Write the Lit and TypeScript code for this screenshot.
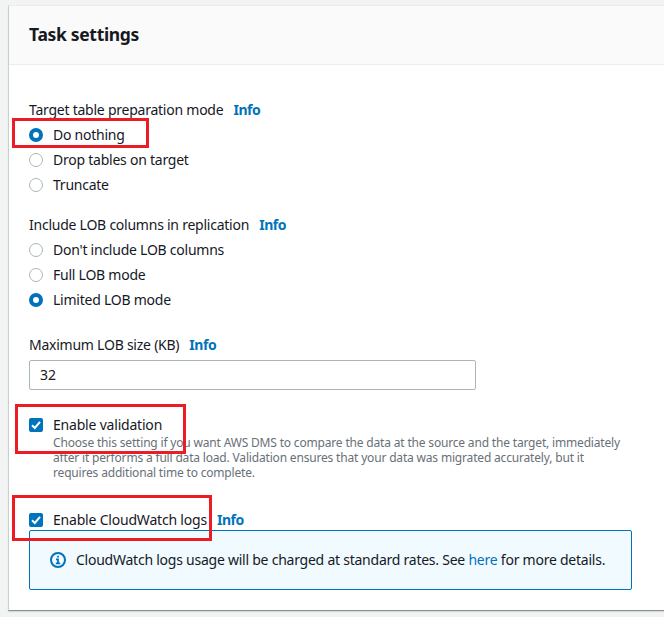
import { LitElement, html, svg, css, nothing } from "lit";
import { customElement, property, state } from "lit/decorators.js";

@customElement("info-link")
class InfoLink extends LitElement {
  static styles = css`
    :host { display: inline-block; margin-left: 10px; }
    a { color: #0073bb; font-weight: 700; letter-spacing: -0.42px; text-decoration: none; }
  `;
  render() {
    return html`<a>Info</a>`;
  }
}

@customElement("radio-group")
class RadioGroup extends LitElement {
  @property() label = "";
  @property({ type: Array }) options: string[] = [];
  @property() value = "";
  @property() marked = "";

  static styles = css`
    :host { display: block; }
    .label { height: 20px; white-space: nowrap; }
    .option { position: relative; display: flex; align-items: center; gap: 10px; height: 20px; margin-top: 5px; white-space: nowrap; }
    .dot { box-sizing: border-box; width: 14px; height: 14px; border: 1px solid #aab7b8; border-radius: 50%; background: #fff; }
    .dot.on { border: 4px solid #0073bb; }
    .mark { position: absolute; left: -17px; top: -7px; width: 131px; height: 24px; border: 3px solid #ed1c24; }
  `;
  render() {
    return html`
      <div class="label">${this.label}<info-link></info-link></div>
      ${this.options.map(
        (o) => html`<div class="option" @click=${() => (this.value = o)}>
          <span class="dot ${o === this.value ? "on" : ""}"></span><span>${o}</span>
          ${o === this.marked ? html`<span class="mark"></span>` : nothing}
        </div>`
      )}
    `;
  }
}

const tick = svg`<path d="M3 7.3 L5.8 10 L11 3.8" fill="none" stroke="#fff" stroke-width="2"/>`;

@customElement("app-root")
class AppRoot extends LitElement {
  @state() private validation = true;
  @state() private logs = true;

  static styles = css`
    :host {
      display: block; box-sizing: border-box; height: 617px; overflow: hidden; padding: 5px 0 6px 8px;
      background: #f2f3f3; color: #16191f;
      font: 14px/20px "Noto Sans", sans-serif; letter-spacing: -0.24px;
    }
    .panel { box-sizing: border-box; height: 606px; background: #fff; border-left: 1px solid #c9cecf; border-top: 1px solid #eaeded; border-bottom: 1px solid #879196; box-shadow: 0 1px 1px #d5dbdb; }
    .header { box-sizing: border-box; height: 59px; padding: 16px 20px; background: #fafafa; border-bottom: 1px solid #eaeded; }
    h2 { margin: 0; font-size: 17.5px; line-height: 24px; font-weight: 700; letter-spacing: -0.32px; }
    .body { padding: 35px 32px 0 20px; }
    .group { margin-bottom: 20px; }
    .group.last { margin-bottom: 25px; }
    .line { white-space: nowrap; }
    .input { box-sizing: border-box; width: 447px; height: 30px; margin: 5px 0 25px; padding: 4px 10px; border: 1px solid #aab7b8; border-radius: 2px; letter-spacing: 0; }
    .check { position: relative; display: grid; grid-template-columns: 14px 1fr; column-gap: 10px; align-items: center; letter-spacing: -0.2px; }
    .check + .check { margin-top: 30px; }
    .box { display: block; width: 14px; height: 14px; border-radius: 2px; background: #0073bb; }
    .help { grid-column: 2; font-size: 12px; line-height: 15px; color: #687078; letter-spacing: -0.177px; white-space: nowrap; }
    .mark { position: absolute; border: 3px solid #ed1c24; }
    .mark.one { left: -14px; top: -11px; width: 165px; height: 44px; }
    .mark.two { left: -17px; top: -15px; width: 194px; height: 40px; z-index: 1; }
    .alert { box-sizing: border-box; display: flex; gap: 10px; width: 603px; height: 60px; padding: 19px 20px; border: 1px solid #0073bb; border-radius: 2px; background: #f1faff; white-space: nowrap; }
    .alert svg { display: block; margin-top: 2px; width: 16px; height: 16px; }
    .alert a { color: #0073bb; }
  `;

  private box(on: boolean) {
    return html`<svg class="box" viewBox="0 0 14 14">${on ? tick : nothing}</svg>`;
  }

  render() {
    return html`
      <section class="panel">
        <div class="header"><h2>Task settings</h2></div>
        <div class="body">
          <radio-group class="group" label="Target table preparation mode" value="Do nothing" marked="Do nothing"
            .options=${["Do nothing", "Drop tables on target", "Truncate"]}></radio-group>
          <radio-group class="group last" label="Include LOB columns in replication" value="Limited LOB mode"
            .options=${["Don't include LOB columns", "Full LOB mode", "Limited LOB mode"]}></radio-group>
          <div class="line">Maximum LOB size (KB)<info-link></info-link></div>
          <div class="input">32</div>
          <div class="check" @click=${() => (this.validation = !this.validation)}>
            ${this.box(this.validation)}<span>Enable validation</span>
            <div class="help">
              Choose this setting if you want AWS DMS to compare the data at the source and the target, immediately<br />
              after it performs a full data load. Validation ensures that your data was migrated accurately, but it<br />
              requires additional time to complete.
            </div>
            <span class="mark one"></span>
          </div>
          <div class="check" @click=${() => (this.logs = !this.logs)}>
            ${this.box(this.logs)}<span class="line">Enable CloudWatch logs<info-link></info-link></span>
            <span class="mark two"></span>
          </div>
          <div class="alert">
            <svg viewBox="0 0 16 16">
              <circle cx="8" cy="8" r="7" fill="none" stroke="#0073bb" stroke-width="2" />
              <path d="M8 3.8V5.6M6 7.4H8V11.4M5.8 11.4H10.2" fill="none" stroke="#0073bb" stroke-width="1.8" />
            </svg>
            <span>CloudWatch logs usage will be charged at standard rates. See <a>here</a> for more details.</span>
          </div>
        </div>
      </section>
    `;
  }
}
